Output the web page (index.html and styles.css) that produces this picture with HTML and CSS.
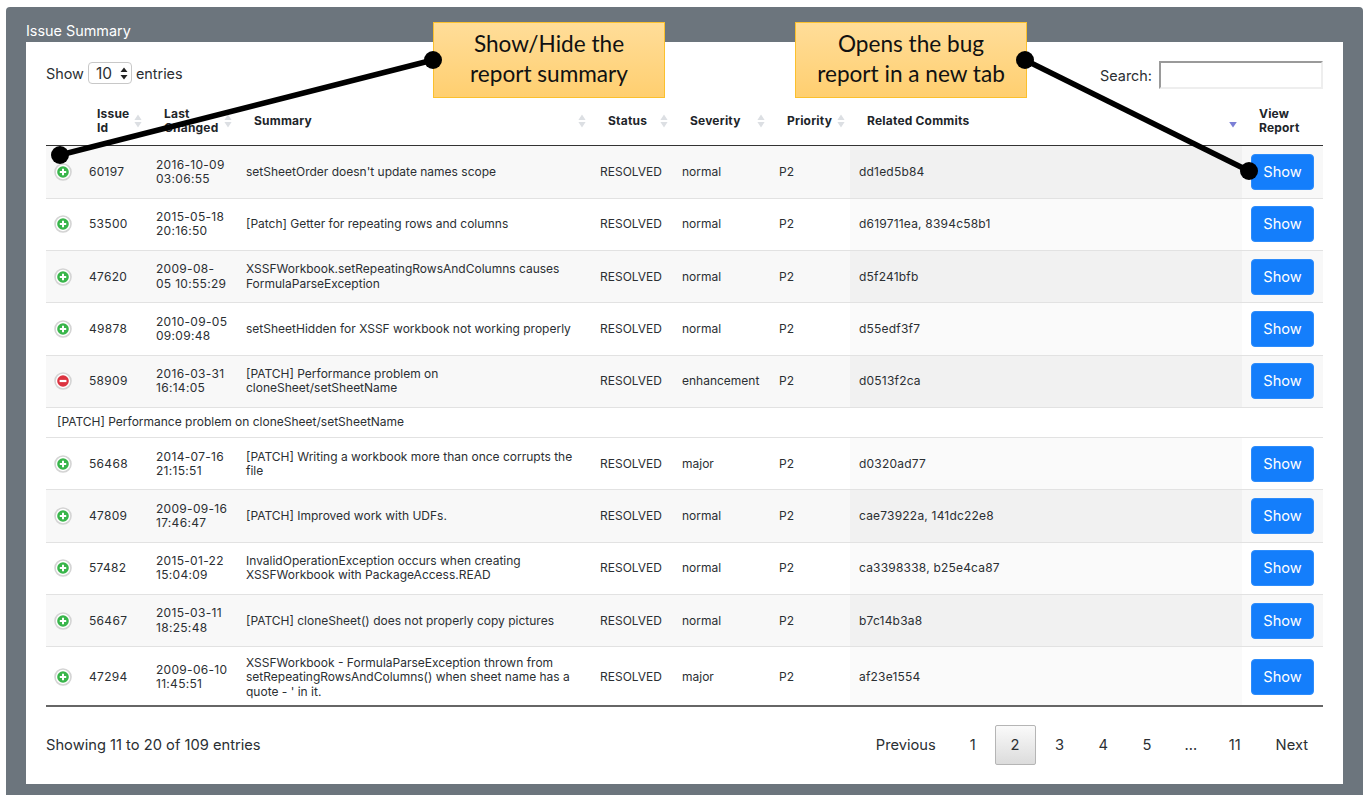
FILE: index.html
```html
<!DOCTYPE html>
<html>
<head>
    <title>Issue Summary</title>
    <link rel="stylesheet" href="styles.css">
</head>

<body>
    <svg class="defs" width="0" height="0">
        <symbol id="plus" viewBox="0 0 18 18">
            <circle cx="9" cy="9" r="8" fill="#fff" stroke="#d4d4d4" stroke-width="1.6"/>
            <circle cx="9" cy="9" r="5.8" fill="#38b54a"/>
            <path d="M9 5.8v6.4M5.8 9h6.4" stroke="#fff" stroke-width="2"/>
        </symbol>
        <symbol id="minus" viewBox="0 0 18 18">
            <circle cx="9" cy="9" r="8" fill="#fff" stroke="#d4d4d4" stroke-width="1.6"/>
            <circle cx="9" cy="9" r="5.8" fill="#dc3340"/>
            <path d="M5.6 9h6.8" stroke="#fff" stroke-width="2.2"/>
        </symbol>
        <symbol id="sort" viewBox="0 0 8 14">
            <path d="M4 0.5L7.6 6H0.4zM4 13.5L0.4 8H7.6z" fill="#dcdfe3"/>
        </symbol>
    </svg>

    <div class="panel">
        <div class="panelTitle">Issue Summary</div>
        <div class="card">
            <div class="controls">
                <div class="lengthBox">Show
                    <div class="fakeSelect">10
                        <svg width="8" height="13" viewBox="0 0 8 13"><path d="M4 0.5L7.5 5H0.5zM4 12.5L0.5 8H7.5z" fill="#222"/></svg>
                    </div>
                    entries
                </div>
                <label class="searchBox">Search: <input type="text"></label>
            </div>

            <table class="issues">
                <colgroup>
                    <col class="colToggle"><col class="colId"><col class="colDate"><col class="colSummary"><col class="colStatus"><col class="colSeverity"><col class="colPriority"><col class="colCommits"><col class="colView">
                </colgroup>
                <thead>
                    <tr>
                        <th></th>
                        <th><div class="thIn"><span>Issue<br>Id</span><svg class="sortIcon"><use href="#sort"/></svg></div></th>
                        <th><div class="thIn"><span>Last<br>Changed</span><svg class="sortIcon"><use href="#sort"/></svg></div></th>
                        <th><div class="thIn"><span>Summary</span><svg class="sortIcon"><use href="#sort"/></svg></div></th>
                        <th><div class="thIn"><span>Status</span><svg class="sortIcon"><use href="#sort"/></svg></div></th>
                        <th><div class="thIn"><span>Severity</span><svg class="sortIcon"><use href="#sort"/></svg></div></th>
                        <th><div class="thIn"><span>Priority</span><svg class="sortIcon"><use href="#sort"/></svg></div></th>
                        <th><div class="thIn"><span>Related Commits</span><svg class="sortIcon" viewBox="0 0 8 14"><path d="M0.2 8H7.8L4 13.5z" fill="#7b7fd6"/></svg></div></th>
                        <th><div class="thIn"><span>View<br>Report</span></div></th>
                    </tr>
                </thead>
                <tbody>
                    <tr class="odd">
                        <td class="toggle"><svg><use href="#plus"/></svg></td><td class="num">60197</td><td class="num">2016-10-09 03:06:55</td><td>setSheetOrder doesn't update names scope</td><td>RESOLVED</td><td>normal</td><td>P2</td><td class="sorted">dd1ed5b84</td><td><button class="showBtn">Show</button></td>
                    </tr>
                    <tr>
                        <td class="toggle"><svg><use href="#plus"/></svg></td><td class="num">53500</td><td class="num">2015-05-18 20:16:50</td><td>[Patch] Getter for repeating rows and columns</td><td>RESOLVED</td><td>normal</td><td>P2</td><td class="sorted">d619711ea, 8394c58b1</td><td><button class="showBtn">Show</button></td>
                    </tr>
                    <tr class="odd">
                        <td class="toggle"><svg><use href="#plus"/></svg></td><td class="num">47620</td><td class="num">2009-08-<br>05 10:55:29</td><td>XSSFWorkbook.setRepeatingRowsAndColumns causes FormulaParseException</td><td>RESOLVED</td><td>normal</td><td>P2</td><td class="sorted">d5f241bfb</td><td><button class="showBtn">Show</button></td>
                    </tr>
                    <tr>
                        <td class="toggle"><svg><use href="#plus"/></svg></td><td class="num">49878</td><td class="num">2010-09-05 09:09:48</td><td>setSheetHidden for XSSF workbook not working properly</td><td>RESOLVED</td><td>normal</td><td>P2</td><td class="sorted">d55edf3f7</td><td><button class="showBtn">Show</button></td>
                    </tr>
                    <tr class="odd">
                        <td class="toggle"><svg><use href="#minus"/></svg></td><td class="num">58909</td><td class="num">2016-03-31 16:14:05</td><td>[PATCH] Performance problem on cloneSheet/setSheetName</td><td>RESOLVED</td><td>enhancement</td><td>P2</td><td class="sorted">d0513f2ca</td><td><button class="showBtn">Show</button></td>
                    </tr>
                    <tr class="childRow">
                        <td colspan="9">[PATCH] Performance problem on cloneSheet/setSheetName</td>
                    </tr>
                    <tr>
                        <td class="toggle"><svg><use href="#plus"/></svg></td><td class="num">56468</td><td class="num">2014-07-16 21:15:51</td><td>[PATCH] Writing a workbook more than once corrupts the file</td><td>RESOLVED</td><td>major</td><td>P2</td><td class="sorted">d0320ad77</td><td><button class="showBtn">Show</button></td>
                    </tr>
                    <tr class="odd">
                        <td class="toggle"><svg><use href="#plus"/></svg></td><td class="num">47809</td><td class="num">2009-09-16 17:46:47</td><td>[PATCH] Improved work with UDFs.</td><td>RESOLVED</td><td>normal</td><td>P2</td><td class="sorted">cae73922a, 141dc22e8</td><td><button class="showBtn">Show</button></td>
                    </tr>
                    <tr>
                        <td class="toggle"><svg><use href="#plus"/></svg></td><td class="num">57482</td><td class="num">2015-01-22 15:04:09</td><td>InvalidOperationException occurs when creating XSSFWorkbook with PackageAccess.READ</td><td>RESOLVED</td><td>normal</td><td>P2</td><td class="sorted">ca3398338, b25e4ca87</td><td><button class="showBtn">Show</button></td>
                    </tr>
                    <tr class="odd">
                        <td class="toggle"><svg><use href="#plus"/></svg></td><td class="num">56467</td><td class="num">2015-03-11 18:25:48</td><td>[PATCH] cloneSheet() does not properly copy pictures</td><td>RESOLVED</td><td>normal</td><td>P2</td><td class="sorted">b7c14b3a8</td><td><button class="showBtn">Show</button></td>
                    </tr>
                    <tr>
                        <td class="toggle"><svg><use href="#plus"/></svg></td><td class="num">47294</td><td class="num">2009-06-10 11:45:51</td><td>XSSFWorkbook - FormulaParseException thrown from setRepeatingRowsAndColumns() when sheet name has a quote - ' in it.</td><td>RESOLVED</td><td>major</td><td>P2</td><td class="sorted">af23e1554</td><td><button class="showBtn">Show</button></td>
                    </tr>
                </tbody>
            </table>

            <div class="footer">
                <div class="info">Showing 11 to 20 of 109 entries</div>
                <div class="pager">
                    <a class="wide">Previous</a>
                    <a>1</a>
                    <a class="current">2</a>
                    <a>3</a>
                    <a>4</a>
                    <a>5</a>
                    <span class="dots">…</span>
                    <a>11</a>
                    <a class="wide next">Next</a>
                </div>
            </div>
        </div>
    </div>

    <!-- annotations drawn over the page -->
    <div class="callout calloutOne">Show/Hide the<br>report summary</div>
    <div class="callout calloutTwo">Opens the bug<br>report in a new tab</div>
    <svg class="arrows" width="1366" height="795" viewBox="0 0 1366 795">
        <path d="M433 60L60 155" stroke="#000" stroke-width="5.5"/>
        <circle cx="433" cy="60" r="9"/>
        <circle cx="60" cy="155" r="9"/>
        <path d="M1025 60L1249 171" stroke="#000" stroke-width="5.5"/>
        <circle cx="1025" cy="60" r="9"/>
        <circle cx="1249" cy="171" r="9"/>
    </svg>
</body>
</html>
```

FILE: styles.css
```css
html, body {margin: 0; padding: 0;}

body
{
    background: white;
    position: relative;
    height: 795px;
    overflow: hidden;
    font-family: Inter, "Liberation Sans", Arial, sans-serif;
    color: #2b2f33;
}

.defs {position: absolute;}

.panel
{
    margin: 7px 3px 0 6px;
    padding: 0 20px 11px;
    background: #6c757d;
    border-radius: 4px 4px 0 0;
}

.panelTitle
{
    height: 35px;
    line-height: 48px;
    font-size: 14.4px;
    color: white;
}

.card
{
    background: white;
    padding: 0 20px;
    height: 742px;
    box-sizing: border-box;
}

.controls
{
    display: flex;
    justify-content: space-between;
    align-items: flex-start;
    height: 58px;
    font-size: 14.4px;
}

.lengthBox
{
    display: flex;
    align-items: center;
    gap: 4px;
    margin-top: 20px;
}

.fakeSelect
{
    display: flex;
    align-items: center;
    justify-content: space-between;
    width: 44px;
    height: 22px;
    box-sizing: border-box;
    padding: 0 3px 0 7px;
    border: 1px solid #c8c8c8;
    border-radius: 4px;
    font-size: 15.5px;
}

.searchBox
{
    display: flex;
    align-items: center;
    gap: 7px;
    margin-top: 19px;
}

.searchBox input
{
    width: 164px;
    height: 28px;
    box-sizing: border-box;
    padding: 0;
    border: 2px solid #eee;
    border-color: #9a9a9a #eee #eee #9a9a9a;
    background: white;
}

.issues
{
    width: 1277px;
    border-collapse: collapse;
    table-layout: fixed;
    font-size: 12px;
    line-height: 14.3px;
}

.colToggle {width: 34px;}
.colId {width: 67px;}
.colDate {width: 90px;}
.colSummary {width: 354px;}
.colStatus {width: 82px;}
.colSeverity {width: 97px;}
.colPriority {width: 80px;}
.colCommits {width: 392px;}
.colView {width: 81px;}

.issues th
{
    height: 45px;
    padding: 0 4px 2px 17px;
    box-sizing: border-box;
    border-bottom: 1px solid #333;
    font-weight: bold;
    letter-spacing: 0.2px;
    text-align: left;
    color: #212529;
}

.thIn
{
    display: flex;
    justify-content: space-between;
    align-items: center;
}

.sortIcon {width: 8px; height: 14px; flex-shrink: 0; margin-right: 1px;}

.issues td
{
    height: 36px;
    padding: 7.65px 9px;
    border-top: 1px solid #e2e2e2;
    vertical-align: middle;
}

.issues tbody tr:first-child td {border-top: 0; padding-top: 8.65px;}
.issues tbody tr:last-child td {border-bottom: 2px solid #666; padding-top: 8.65px; padding-bottom: 5.65px;}

.issues .odd td {background: #f8f8f8;}
.issues td.sorted {background: #fafafa; letter-spacing: 0.2px;}
.issues .odd td.sorted {background: #f1f1f1;}
.issues td.num {letter-spacing: 0.3px;}

.issues .childRow td
{
    height: auto;
    padding: 7.5px 11px;
}

.issues td.toggle {padding-left: 8px; padding-right: 0;}
.toggle svg {display: block; width: 18px; height: 18px;}

.showBtn
{
    display: block;
    width: 63px;
    height: 36px;
    padding: 0;
    border: 1px solid #2d8cfb;
    border-radius: 4px;
    background: #147efb;
    color: white;
    font: 14.6px Inter, "Liberation Sans", Arial, sans-serif;
}

.footer
{
    display: flex;
    justify-content: space-between;
    align-items: center;
    margin-top: 18px;
    font-size: 14.7px;
}

.pager
{
    display: flex;
    align-items: center;
}

.pager a, .pager .dots
{
    display: block;
    width: 43.8px;
    height: 40px;
    line-height: 40px;
    box-sizing: border-box;
    text-align: center;
}

.pager .wide {width: auto; padding: 0 15px;}
.pager .next {margin-left: 4px;}

.pager .current
{
    width: 41px;
    margin-right: 2px;
    border: 1px solid #b5b5b5;
    border-radius: 2px;
    line-height: 38px;
    background: linear-gradient(#fafafa, #dcdcdc);
}

.callout
{
    position: absolute;
    top: 22px;
    height: 76px;
    box-sizing: border-box;
    padding-top: 6px;
    border: 1px solid #fbc02d;
    background: linear-gradient(#ffdd99, #ffcf70);
    font: 22.6px/30px Lato, sans-serif;
    color: #111;
    text-align: center;
}

.calloutOne {left: 433px; width: 232px;}
.calloutTwo {left: 795px; width: 232px;}

.arrows {position: absolute; left: 0; top: 0;}
```
